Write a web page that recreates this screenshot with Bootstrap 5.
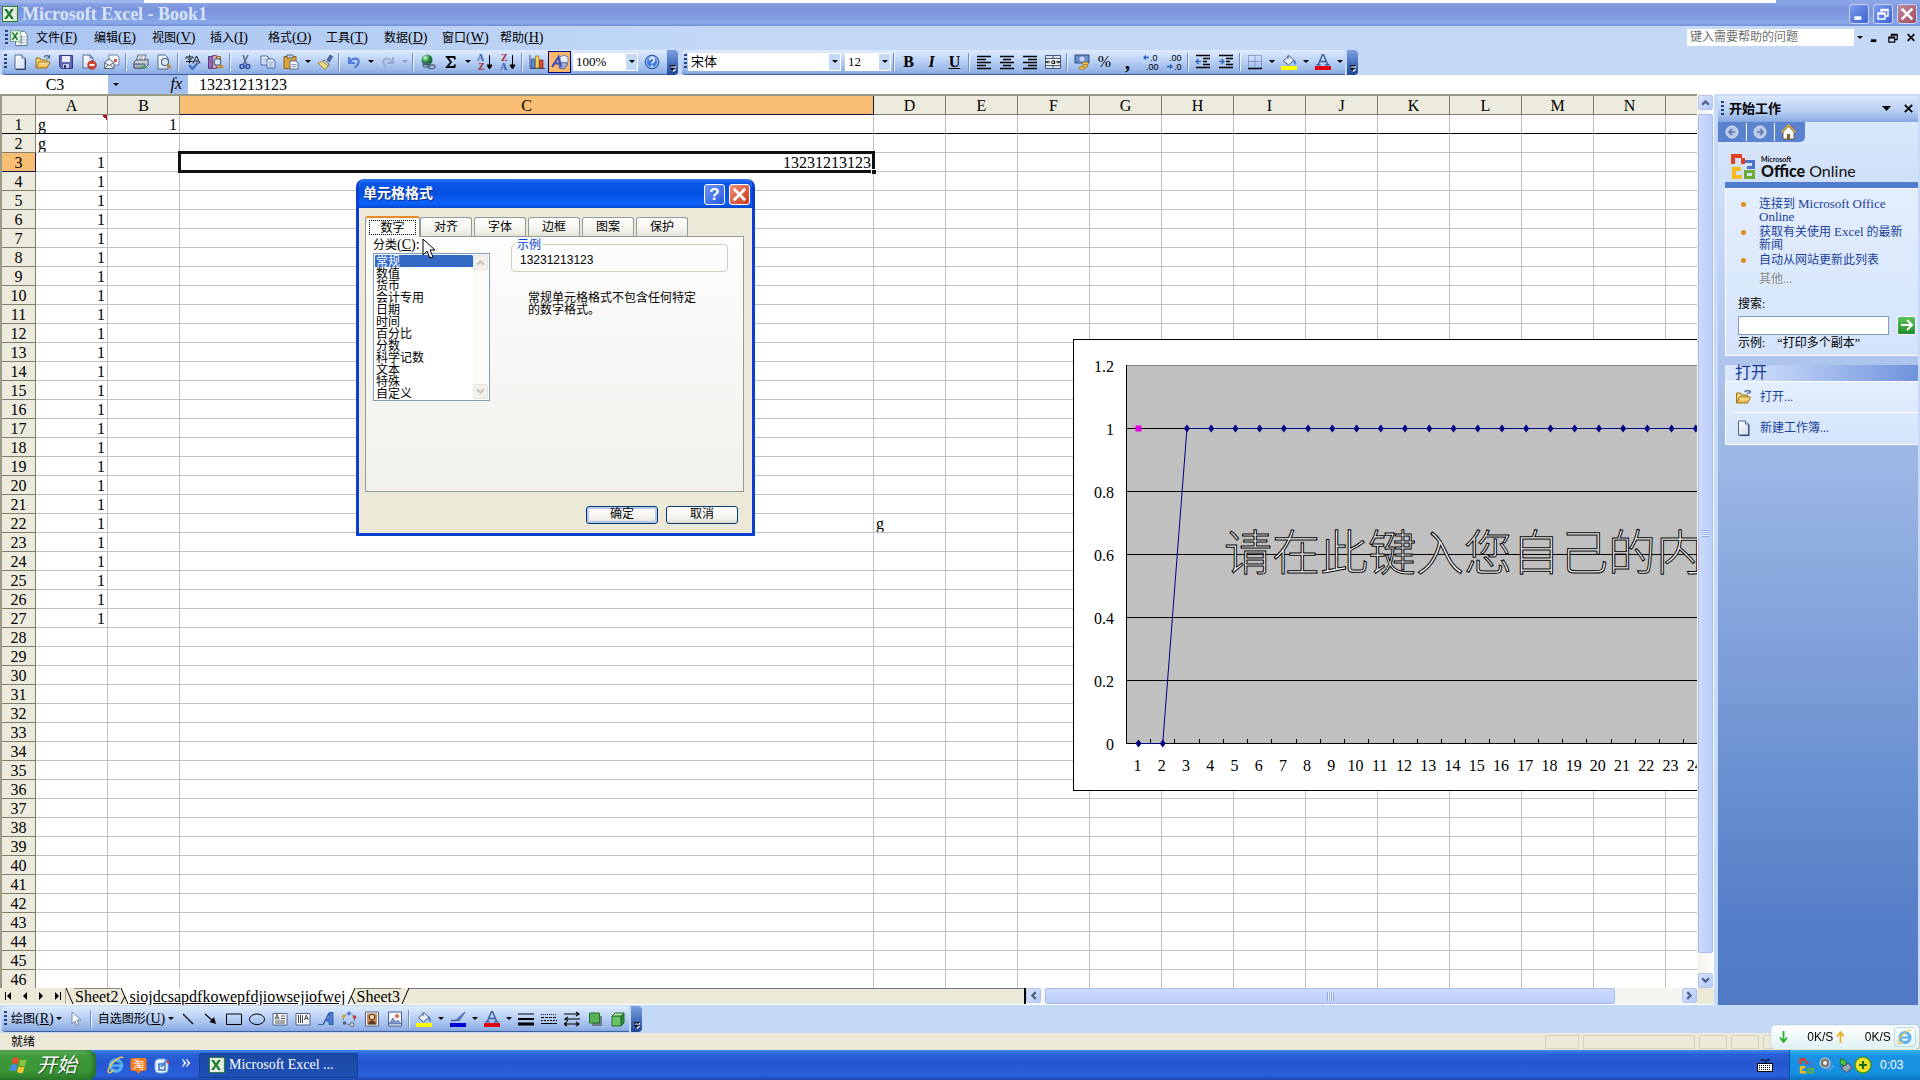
<!DOCTYPE html>
<html lang="zh-CN">
<head>
<meta charset="utf-8">
<meta name="viewport" content="width=device-width, initial-scale=1">
<title>Microsoft Excel - Book1</title>
<link href="https://cdn.jsdelivr.net/npm/bootstrap@5.3.0/dist/css/bootstrap.min.css" rel="stylesheet">
<style>
:root{--ui:"Liberation Serif","Noto Sans CJK SC",serif;--beige:#ece9d8;--line:#c0c0c0;--head:#edebdd;--olive:#807f6c}
body{font-family:var(--ui);font-size:12px;line-height:16px;color:#000;background:#c4d9f6;height:100vh;overflow:hidden}
button{font-family:inherit;color:inherit;border:0;background:none;padding:0}
svg{display:block;flex:none}
.lat{font-size:14px;line-height:0}
.strip{height:3px;background:linear-gradient(90deg,#9cb4ea 7.5%,#fff 7.5%,#fff 92.5%,#8ba6e8 92.5%)}
.titlebar{height:23px;background:linear-gradient(#8aa4e6,#7b93dc 25%,#7f9ce2 60%,#87a9e8 85%,#7690da);color:#d8e4f8;font-size:18px;font-weight:bold;padding:0 3px 0 2px}
.wbtn{width:20px;height:20px;border:1px solid #c9d6f5;border-radius:3px;background:linear-gradient(135deg,#7c9bee,#3d63d0)}
.wbtn.shut{background:linear-gradient(135deg,#c28b9c,#a04a60)}
.menubar{height:24px;background:linear-gradient(90deg,#a9c4f2,#c4d9f6 38%);padding-left:5px}
.grip{width:3px;height:16px;background:repeating-linear-gradient(#27417a 0 2px,transparent 2px 4px);margin-right:1px}
.mitem{width:58px;height:22px;text-align:left}
.askbox{width:178px;height:17px;background:#fff}
.askbox input{width:164px;border:0;padding:0 3px;font-size:12px;height:17px;color:#666;font-family:var(--ui);outline:0}
.askbox input::placeholder{color:#6d6d6d;opacity:1}
.drop{width:11px;align-self:stretch;background:#c4d9f6}
.drop,.darr{display:flex;align-items:center;justify-content:center}
.drop::before,.darr::before{content:"";border:3px solid transparent;border-top:3px solid #000;border-bottom:0}
.darr{width:11px;height:22px}
.darr.off::before{border-top-color:#8a9bbd}
.bars{height:25px;background:#c4d9f6;padding-left:2px}
.tbar{height:25px;background:linear-gradient(#dfebfd,#c3d8f8 35%,#9dbaea 80%,#86a8e2);border-bottom:1px solid #3c5f9e;border-radius:4px 0 0 4px;padding-left:2px}
.tb{width:23px;height:22px;display:flex;align-items:center;justify-content:center}
.tb.on{background:#fdb768;border:1px solid #000080}
.vsep{width:6px;height:18px;background:linear-gradient(90deg,transparent 2px,#6a8ccb 2px 3px,#f1f6fe 3px 4px,transparent 4px)}
.tend{width:11px;height:25px;background:linear-gradient(#7ba0de,#4a74c0 50%,#1f4494);border-radius:0 4px 4px 0;display:flex;align-items:flex-end;justify-content:center;padding-bottom:3px;margin-left:2px}
.tend svg{filter:drop-shadow(1px 1px 0 #fff)}
.combo{height:18px;background:#fff;border:1px solid #fff}
.combo select{appearance:none;border:0;background:#fff;font-size:13px;line-height:16px;padding:0 2px;height:16px;flex:1;min-width:0;font-family:var(--ui);outline:0}
.zoomw{width:65px;margin:0 2px}
.fontw{width:153px}
.sizew{width:46px}
.fbar{height:19px;background:#fff;font-size:16px;line-height:20px}
.namebox{width:106px;margin-left:2px;text-align:center}
.fxbox{width:80px;background:#a4bff0;padding:0 2px}
.fxbox i{font-size:16px}
.formula{border:0;outline:0;flex:1;padding:1px 11px 0;font-size:16px;font-family:var(--ui);height:19px}
.sheetwrap{border-left:2px solid #9b9a86;border-top:2px solid #9b9a86;background:#fff;min-height:0}
.grid{border-collapse:separate;border-spacing:0;table-layout:fixed;width:100%;font-size:16px}
.grid td,.grid th{height:19px;line-height:16px;padding:2px 2px 0;border-right:1px solid var(--line);border-bottom:1px solid var(--line);white-space:nowrap;font-weight:normal;overflow:hidden}
.grid th{background:var(--head);border-color:var(--olive);text-align:center;padding:2px 0 0}
.grid th.hot{background:#f8bf74;border-bottom-color:#1b1340;border-right-color:#1b1340}
.grid .first td,.grid .first th{border-bottom-color:#000}
.grid td:last-child,.grid thead th:last-child{border-right:0}
.num{text-align:right}
.grid td.note{background:linear-gradient(45deg,transparent 50%,#b01020 50%) top right/5px 5px no-repeat}
.grid td.cur{position:relative;overflow:visible}
.cur::before{content:"";position:absolute;inset:-2px;border:3px solid #111}
.cur::after{content:"";position:absolute;right:-3px;bottom:-3px;width:5px;height:5px;background:#111;border:solid #fff;border-width:1px 0 0 1px}
.chart{position:absolute;left:1071px;top:243px}
.vbar{width:17px;flex:none;background:linear-gradient(90deg,#f1f3ee,#fefefb);padding:1px 1px 0}
.sbtn{width:15px;height:15px;border:1px solid #b3c5f0;border-radius:2px;background:linear-gradient(135deg,#d9e4fd,#b5c9f8);display:flex;align-items:center;justify-content:center;flex:none}
.thumb{border:1px solid #a6bbf0;border-radius:2px;background:linear-gradient(90deg,#cddafc,#bacdfa);display:flex;align-items:center;justify-content:center}
.vthumb{height:94%}
.hthumb{width:85%;background:linear-gradient(#cddafc,#bacdfa)}
.vgrip{width:7px;height:7px;background:repeating-linear-gradient(#8ea9e8 0 1px,#eef3fe 1px 2px)}
.hgrip{width:7px;height:9px;background:repeating-linear-gradient(90deg,#8ea9e8 0 1px,#eef3fe 1px 2px)}
.tabrow{height:17px;background:var(--beige);border-bottom:1px solid #fff}
.tabnav{width:66px;padding:0 3px 0 4px;border-right:1px solid #aaa79a}
.stab{font-size:16px;line-height:16px;height:16px;border-top:1px solid #8a8778;padding:0 1px;color:#000}
.stab.act{background:#fff;border-top-color:#fff;text-decoration:underline}
.hbar{width:673px;background:#f6f5f0;border-left:2px solid #000}
.corner{width:17px}
.pane{width:206px;flex:none;background:#c7daf7;padding:2px 2px 0 4px}
.paneinner{background:linear-gradient(#dbe8fb,#b6ccf2 22%,#a8c0ea 30%,#557fc8 90%,#4f79c2)}
.panehead{height:26px;background:linear-gradient(#dce9fc,#b6cdf2 60%,#86a8e0);font-size:13px;font-weight:bold;padding:0 4px 0 3px}
.panenav{width:87px;height:20px;background:#5a82ce;border-radius:0 0 5px 0;padding-left:7px}
.logo{margin:6px 0 0 8px;height:34px;padding-left:3px}
.logo div{font-family:Lato,"Open Sans",sans-serif;font-size:16px;line-height:17px;color:#111}
.logo b{font-weight:900}
.logo small{display:block;font-size:7px;line-height:6px;font-weight:bold}
.bluebar{height:6px;background:#4f7ccc;margin-left:7px}
.pbox{margin-left:7px;border:1px solid #fff;border-right:0;background:linear-gradient(#e3eefd,#d5e4fb)}
.pbox a{color:#1a3f9a;text-decoration:none}
.plist{list-style:none;margin:0;padding:9px 4px 0 33px;line-height:13px}
.plist .lat{font-size:13px}
.plist li{margin-bottom:2px;position:relative}
.plist li:not(.more)::before{content:"";position:absolute;left:-18px;top:4px;width:5px;height:5px;border-radius:50%;background:#e08a20}
.more{color:#8c8c86}
.sfield{width:151px;height:19px;border:1px solid #7f9db9;padding:0 2px;outline:0}
.gobtn{width:19px;height:19px;background:linear-gradient(#5cc15a,#1f8f2d);border:1px solid #fff;border-radius:2px;display:flex;align-items:center;justify-content:center}
.openhead{margin:9px 0 0 7px;height:16px;background:linear-gradient(90deg,#dde9fb,#c7d8f8 20%,#6f93de);font-size:16px;color:#17398f;padding-left:10px}
.orow{height:31px;padding-left:1px}
.drawrow{background:#c4d9f6;height:28px;padding:1px 0 0 2px}
.drawrow .tbar,.drawrow .tend{height:26px}
.dlabel{height:22px;white-space:nowrap}
.status{height:17px;background:var(--beige);padding:1px 0 0 11px}
.spane{border:1px solid #d6d3c2;height:14px;margin-left:4px;width:28px}
.spane.w1{width:34px}
.spane.w2{width:112px}
.spane.w3{width:157px}
.taskbar{height:30px;background:linear-gradient(#3f86ee,#2a63d8 14%,#2556cf 40%,#2b60dc 85%,#1e46ae)}
.start{width:96px;background:linear-gradient(#6bb96a,#3f9a3c 20%,#3a9637 70%,#2c7a2b);border-radius:0 8px 8px 0;color:#fff;font-size:20px;font-style:italic;box-shadow:inset -3px 0 4px #24702a;padding-left:10px;text-shadow:1px 1px 1px #1d4d1d}
.task{width:159px;height:25px;background:linear-gradient(#1c49a6,#1e50b4);color:#fff;border:1px solid #173f94;border-radius:2px;padding-left:9px}
.tray{width:131px;background:linear-gradient(#37b4f2,#1a92e4 20%,#1590e0 80%,#0f70c0);border-left:1px solid #0c4da0;color:#fff;padding-left:8px;font-family:"Liberation Sans",sans-serif}
.speed{position:fixed;right:1px;bottom:31px;width:148px;height:24px;background:linear-gradient(#fff,#dff2f4);border:1px solid #e9f4f6;border-radius:4px;font-family:"Liberation Sans",sans-serif;box-shadow:0 0 1px #789;padding:0 2px 0 7px}
.iebox{width:22px;height:20px;border:1px solid #b6dbe8;border-radius:3px;display:flex;align-items:center;justify-content:center}
/* dialog window */
.dlg{position:absolute;left:354px;top:83px;width:399px;border:solid #0a3fd0;border-width:0 3px 3px;border-radius:8px 8px 0 0;background:var(--beige);overflow:hidden}
.dlgbar{height:29px;margin:0 -3px;background:linear-gradient(#2b78f5,#0a56e6 15%,#0550e0 50%,#0a62fa 85%,#0845c8);color:#fff;font-size:14px;font-weight:bold;padding:2px 5px 0 7px;text-shadow:1px 1px #0a2a80}
.cbtn{width:21px;height:21px;border:1px solid #fff;border-radius:3px;background:linear-gradient(135deg,#6d95f5,#2a5be0);display:flex;align-items:center;justify-content:center;font:bold 17px/17px "Liberation Sans",sans-serif;color:#fff}
.cbtn.shut{background:linear-gradient(135deg,#ec8e78,#cf3a1a)}
.dtabs{padding:0 6px;height:28px}
.dtab{width:52px;height:19px;border:1px solid #919b9c;border-bottom:0;border-radius:3px 3px 0 0;background:linear-gradient(#fff,#f2f1ea 70%,#e4e2d6);margin-right:2px;line-height:19px}
.dtab.act{width:55px;height:21px;margin-right:0;background:#fcfcfb;border-top:2px solid #e68b2c;z-index:1;margin-bottom:-1px}
.dtab.act span{display:block;margin:2px 3px 2px;border:1px dotted #000;line-height:14px;height:15px}
.dpanel{margin:0 8px 0 6px;height:256px;border:1px solid #919b9c;background:linear-gradient(#fdfdfc,#f1f0ec);padding:0 15px 0 7px}
.lbox{width:117px;height:148px;border:1px solid #7f9db9;background:#fff;padding:1px}
.lbox select{appearance:none;border:0;outline:0;width:98px;padding:0;margin:0;font:12px/12px var(--ui);height:144px;overflow:hidden;background:#fff}
.lbox option{display:flex;align-items:center;padding:0 0 0 1px;min-height:12px;height:12px;line-height:12px;color:#000}
.lbox option:checked{background:#316ac5 linear-gradient(#316ac5,#316ac5);color:#fff}
.lbar{width:15px;background:#fbfbf8;color:#c9c7ba}
.lbar div{height:15px;border:1px solid #e8e6dc;border-radius:2px;background:#f2f1eb;display:flex;align-items:center;justify-content:center}
.rside{width:217px;padding-top:2px}
.samp{height:33px;border:1px solid #d0d0bf;border-radius:4px;margin:0;padding:1px 8px 0}
.samp legend{float:none;width:auto;font-size:12px;line-height:12px;padding:0 2px;margin:0 0 0 -5px;color:#0046d5}
.samp output{display:block;font:12px/16px "Liberation Sans",sans-serif}
.desc{margin:20px 30px 0 17px;line-height:12px}
.dfoot{padding:14px 14px 9px 0}
.okb{width:72px;height:18px;border:1px solid #003c74;border-radius:3px;background:linear-gradient(#fff,#f4f3ee 70%,#dcd8cc);line-height:15px}
.okb.def{box-shadow:inset 0 0 0 2px #b5c9ef}
.pointer{position:absolute;left:63px;top:59px}
.blue{color:#4d6185}
</style>
</head>
<body class="d-flex flex-column">

<svg width="0" height="0" class="position-absolute">
<defs>
<linearGradient id="gfold" x1="0" y1="0" x2="0" y2="1"><stop offset="0" stop-color="#fff0a8"/><stop offset="1" stop-color="#e8a93a"/></linearGradient>
<linearGradient id="gpage" x1="0" y1="0" x2="1" y2="1"><stop offset="0" stop-color="#fff"/><stop offset="1" stop-color="#cfd8ea"/></linearGradient>
<radialGradient id="gball" cx=".35" cy=".3"><stop offset="0" stop-color="#dffbe0"/><stop offset=".6" stop-color="#3ba456"/><stop offset="1" stop-color="#1a6a3c"/></radialGradient>
<symbol id="xl" viewBox="0 0 16 16"><rect x=".5" y=".5" width="15" height="15" fill="#e9f3e4" stroke="#2f7d3b"/><path d="M10 2h4v12h-4z" fill="#fff" stroke="#9ac49a" stroke-width=".6"/><path d="M10 5h4M10 8h4M10 11h4" stroke="#9ac49a" stroke-width=".6"/><path d="M2 3l3 0 2 3.300L9 3h3L8.400 8l3.600 5H9L7 9.800 5 13H2l3.600-5z" fill="#1f7a36"/></symbol>
<symbol id="new" viewBox="0 0 16 16"><path d="M3 1h7l3 3v11H3z" fill="url(#gpage)" stroke="#51698f"/><path d="M10 1v3h3" fill="#dfe7f5" stroke="#51698f"/><path d="M13.500 4.500v11H4" stroke="#27406e" fill="none"/></symbol>
<symbol id="open" viewBox="0 0 16 16"><path d="M1 14V4h4l1 2h6v2" fill="#f0cf6f" stroke="#9a7420"/><path d="M1 14l3-6h11l-3 6z" fill="url(#gfold)" stroke="#9a7420"/><path d="M9 3c2-2 4-1.500 5 0M14.500 1v3h-3" fill="none" stroke="#43628f" stroke-width="1.200"/></symbol>
<symbol id="save" viewBox="0 0 16 16"><path d="M1.500 1.500h13v13h-11l-2-2z" fill="#5f63b8" stroke="#35397f"/><path d="M4 2h8v6H4z" fill="#e8ecfa"/><path d="M5 10h6v4H5z" fill="#c8cdec"/><path d="M6 11h2v3H6z" fill="#33377a"/></symbol>
<symbol id="perm" viewBox="0 0 16 16"><path d="M2 1h7l3 3v10H2z" fill="url(#gpage)" stroke="#51698f"/><path d="M9 1v3h3" fill="none" stroke="#51698f"/><circle cx="11" cy="11" r="4.300" fill="#d5442e" stroke="#8e1f10" stroke-width=".6"/><path d="M8.500 10h5v2h-5z" fill="#fff"/></symbol>
<symbol id="mail" viewBox="0 0 16 16"><path d="M5 1h8l2 2v8H5z" fill="#fff" stroke="#6c7c97"/><path d="M10 5h3v3h-3z" fill="#d1574b"/><path d="M.5 8.500L5 5l5 3.500v6H.5z" fill="#eef0f4" stroke="#5d6a80"/><path d="M.5 8.500l4.700 3 4.800-3M.5 14.500L4 11M10 14.500L6.500 11" fill="none" stroke="#5d6a80"/></symbol>
<symbol id="print" viewBox="0 0 16 16"><path d="M5 1h8l-2 6H3z" fill="#fff" stroke="#59657b"/><path d="M5.500 3h5M5 5h5" stroke="#8a93a5"/><path d="M1 8l2-2h10l2-1v6l-3 3H1z" fill="#c9ced8" stroke="#4b566b"/><path d="M1 10h11v4H1z" fill="#aab1bf" stroke="#4b566b"/><path d="M8 12h5l1 2H8z" fill="#3fae49"/></symbol>
<symbol id="prev" viewBox="0 0 16 16"><path d="M2 1h7l3 3v11H2z" fill="url(#gpage)" stroke="#51698f"/><circle cx="9" cy="8" r="3.500" fill="#d8ecfb" stroke="#4b6792" stroke-width="1.200"/><path d="M11.500 10.500l3.500 3.500" stroke="#c88a28" stroke-width="2.400"/></symbol>
<symbol id="spell" viewBox="0 0 16 16"><path d="M1 3h7M4.500 1v2M1 3v1.500M8 3v1.500M2.500 5h4L4.500 6.500v3M1 7.500h7M8 9.500L11.500 2 15 9.500M9.500 7h4" fill="none" stroke="#111"/><path d="M4 11l3.500 4L13 8.500" fill="none" stroke="#3f6fc0" stroke-width="2.400"/></symbol>
<symbol id="research" viewBox="0 0 16 16"><path d="M.5 2.500h4v12h-4z" fill="#9067b5" stroke="#5a3a80"/><path d="M4.500 1.500h4v13h-4z" fill="#d0a0c0" stroke="#7c4a6e"/><path d="M8.500 2.500h4v11h-4z" fill="#eac67d" stroke="#8f7030"/><circle cx="9.500" cy="8" r="3.300" fill="#d8ecfb" stroke="#4b6792" stroke-width="1.200"/><path d="M12 10.500l3 3.500" stroke="#c88a28" stroke-width="2.200"/></symbol>
<symbol id="cut" viewBox="0 0 16 16"><path d="M6 1l3.500 9M11 1L6.500 10" stroke="#556a8f" stroke-width="1.600"/><circle cx="5" cy="12.500" r="2" fill="none" stroke="#2b4ea2" stroke-width="1.600"/><circle cx="10.800" cy="12.500" r="2" fill="none" stroke="#2b4ea2" stroke-width="1.600"/></symbol>
<symbol id="copy" viewBox="0 0 16 16"><path d="M1 2h6l2 2v7H1z" fill="#fff" stroke="#3f5fa5"/><path d="M2.500 5h4M2.500 7h4M2.500 9h3" stroke="#8aa0d0"/><path d="M7 5h6l2 2v7H7z" fill="#fff" stroke="#3f5fa5"/><path d="M8.500 8h5M8.500 10h5M8.500 12h5" stroke="#6f8bc8"/></symbol>
<symbol id="paste" viewBox="0 0 16 16"><path d="M1 2.500h12v12H1z" fill="#dba53c" stroke="#8a6217"/><path d="M4 1h6v3H4z" fill="#cfd4de" stroke="#59657b"/><path d="M7 7h6l2 2v6H7z" fill="#fff" stroke="#51698f"/><path d="M8.500 10.500h5M8.500 12.500h5" stroke="#7d94bf"/></symbol>
<symbol id="brush" viewBox="0 0 16 16"><path d="M10 6l3-5 2.500 1.500L12.500 8z" fill="#4d67a8" stroke="#2d3f70" stroke-width=".6"/><path d="M7 6l5 4-1 2-6-4z" fill="#d9dde8" stroke="#667"/><path d="M5 7l6 5-3 3.500L1 9c2 0 3-1 4-2z" fill="#f2dc86" stroke="#a5842b"/></symbol>
<symbol id="undo" viewBox="0 0 16 16"><path d="M3 3v6h6M3.500 8.500C7 2.500 14 4 12.500 9c-.5 2-2 3.500-4 4.500" fill="none" stroke="#4f7cd8" stroke-width="2.200"/></symbol>
<symbol id="redo" viewBox="0 0 16 16"><path d="M13 3v6H7M12.500 8.500C9 2.500 2 4 3.500 9c.5 2 1.500 3 2.500 4" fill="none" stroke="#93a9cf" stroke-width="1.800"/></symbol>
<symbol id="link" viewBox="0 0 16 16"><circle cx="7" cy="6" r="5.500" fill="url(#gball)"/><rect x="3" y="9.500" width="7" height="3.600" rx="1.800" fill="none" stroke="#55627d" stroke-width="1.300"/><rect x="8" y="11" width="7" height="3.600" rx="1.800" fill="none" stroke="#55627d" stroke-width="1.300"/></symbol>
<symbol id="sigma" viewBox="0 0 16 16"><path d="M12 5.500L11.500 3H4l4 5-4 5h7.500l.5-2.500" fill="none" stroke="#000" stroke-width="1.800"/></symbol>
<symbol id="chart" viewBox="0 0 16 16"><path d="M1 1v13.500h15" stroke="#33507f" fill="none"/><path d="M2.500 5h3.500v9H2.500z" fill="#5f86d8" stroke="#2b4a8c" stroke-width=".7"/><path d="M6.500 2H10v12H6.500z" fill="#f2cf48" stroke="#92701c" stroke-width=".7"/><path d="M10.500 6H14v8h-3.500z" fill="#dd4a35" stroke="#7e1f14" stroke-width=".7"/></symbol>
<symbol id="help" viewBox="0 0 16 16"><circle cx="8" cy="8" r="6.800" fill="#3f7be0" stroke="#2550a0"/><circle cx="8" cy="8" r="5.600" fill="none" stroke="#cfe0ff" stroke-width=".8"/><path d="M5.800 6.200c0-3 4.600-3 4.600-.2 0 1.700-2.300 1.700-2.300 3.500M8 11v1.700" fill="none" stroke="#fff" stroke-width="1.600"/></symbol>
<symbol id="al" viewBox="0 0 16 16"><path d="M1 2.500h14M1 5.500h9M1 8.500h14M1 11.500h9M1 14.500h14" stroke="#000" stroke-width="1.300"/></symbol>
<symbol id="ac" viewBox="0 0 16 16"><path d="M1 2.500h14M4 5.500h8M1 8.500h14M4 11.500h8M1 14.500h14" stroke="#000" stroke-width="1.300"/></symbol>
<symbol id="ar" viewBox="0 0 16 16"><path d="M1 2.500h14M6 5.500h9M1 8.500h14M6 11.500h9M1 14.500h14" stroke="#000" stroke-width="1.300"/></symbol>
<symbol id="merge" viewBox="0 0 16 16"><path d="M.5 1.500h15v13H.5z" fill="#dfe6f3" stroke="#45577c"/><path d="M.5 4.500h15M.5 11.500h15M8 1v3.500M8 11.500v3" stroke="#45577c"/><path d="M1 5h14v6H1z" fill="#fff"/><path d="M1 8h4M3 6.500L1.500 8 3 9.500M15 8h-4M13 6.500L14.500 8 13 9.500" stroke="#000" fill="none"/><circle cx="8" cy="8.300" r="1.500" fill="none" stroke="#000"/><path d="M9.700 6.500v3.500" stroke="#000"/></symbol>
<symbol id="cash" viewBox="0 0 16 16"><path d="M1 1h14v8H1z" fill="#6b8cc8" stroke="#2e4a86"/><circle cx="8" cy="5" r="2.500" fill="#c6d6f2"/><ellipse cx="11.500" cy="9.500" rx="3" ry="1.400" fill="#f4c44c" stroke="#946c16" stroke-width=".7"/><ellipse cx="11" cy="12" rx="3" ry="1.400" fill="#f4c44c" stroke="#946c16" stroke-width=".7"/><ellipse cx="8" cy="14" rx="3" ry="1.400" fill="#f4c44c" stroke="#946c16" stroke-width=".7"/></symbol>
<symbol id="outd" viewBox="0 0 16 16"><path d="M1 1.500h14M8 4.500h7M8 7.500h4M8 10.500h7M1 13.500h14" stroke="#000" stroke-width="1.500"/><path d="M6 7.500H1M3.500 5L1 7.500 3.500 10" stroke="#3768c8" fill="none" stroke-width="1.400"/></symbol>
<symbol id="ind" viewBox="0 0 16 16"><path d="M1 1.500h14M8 4.500h7M8 7.500h4M8 10.500h7M1 13.500h14" stroke="#000" stroke-width="1.500"/><path d="M1 7.500h5M3.500 5L6 7.500 3.500 10" stroke="#3768c8" fill="none" stroke-width="1.400"/></symbol>
<symbol id="border" viewBox="0 0 16 16"><path d="M1.500 1.500h13v12M1.500 1.500v12M8 1.500v12M1.500 7.500h13" fill="none" stroke="#5d6f92" stroke-dasharray="1 1"/><path d="M1 14.500h14" stroke="#000" stroke-width="1.500"/></symbol>
<symbol id="fill" viewBox="0 0 16 16"><path d="M2.500 7L8 1.500 13 6.500 7.500 11z" fill="#e6edf8" stroke="#47597c"/><path d="M7 5V1.500" stroke="#47597c"/><path d="M12 5c3 1 3 4 2.500 6-2-1-1.500-3-2.500-6z" fill="#3f6fc8"/><path d="M0 12h16v4H0z" fill="#ff0"/></symbol>
<symbol id="pen" viewBox="0 0 16 16"><path d="M1 9c3 2 4-1 6 0l2 1 6-9-7 6-2 3z" fill="#5b84cf" stroke="#2d4a8a" stroke-width=".7"/><path d="M0 12h16v4H0z" fill="#0000d8"/></symbol>
<symbol id="redbar" viewBox="0 0 16 16"><path d="M3 11L7.500.8h1L13 11M5 7.500h6M1.500 10.800h4M10 10.800h4.500" stroke="#3b5f9f" fill="none" stroke-width="1.500"/><path d="M0 12h16v4H0z" fill="#e00010"/></symbol>
<symbol id="artA" viewBox="0 0 16 16"><path d="M0 13.500h5l6-12h4v12h-4V10H7l-1.500 3.500M8.300 8H11V3z" fill="#4b7bd4" stroke="#224c9c" stroke-width=".8"/></symbol>
<symbol id="shapes" viewBox="0 0 18 16"><path d="M9 3l4-2 4 2v5l-4 2-4-2z" fill="#e9edf8" stroke="#6a78a5"/><path d="M8 11l5-3 4 2-4 5-5-1z" fill="#9fb0d8" stroke="#516498"/><path d="M1 13L7.500 3 10 13M3.500 9.500H9" stroke="#3c4fb8" stroke-width="2.200" fill="none"/></symbol>
<symbol id="cursor" viewBox="0 0 16 16"><path d="M4 1v12l3-3 2 5 2-1-2-5h4z" fill="#fff" stroke="#7787ab"/></symbol>
<symbol id="ln" viewBox="0 0 16 16"><path d="M3 3l10 10" stroke="#000" stroke-width="1.200"/></symbol>
<symbol id="arrw" viewBox="0 0 16 16"><path d="M2 3l8 7" stroke="#000" stroke-width="1.200"/><path d="M13 13l-2-7-4.500 5z"/></symbol>
<symbol id="rc" viewBox="0 0 16 16"><path d="M.5 3h15v10.500H.5z" fill="none" stroke="#000"/></symbol>
<symbol id="el" viewBox="0 0 16 16"><ellipse cx="8" cy="8.300" rx="7.500" ry="5.300" fill="none" stroke="#000"/></symbol>
<symbol id="tx" viewBox="0 0 16 16"><path d="M1 2.500h14v11.500H1z" fill="#fff" stroke="#4b5f8d"/><path d="M3 8.500l2-5 2 5M3.700 7h2.600M9 5h4M9 7.500h4M3 10h10M3 12h10" fill="none" stroke="#334" stroke-width=".9"/></symbol>
<symbol id="vx" viewBox="0 0 16 16"><path d="M1 2.500h14v11.500H1z" fill="#fff" stroke="#4b5f8d"/><path d="M3.500 4v8M5.500 4v8M7.500 4v8M9.500 9l1.800-5 2 5M10 7.500h3" fill="none" stroke="#334" stroke-width=".9"/></symbol>
<symbol id="dg" viewBox="0 0 16 16"><circle cx="8" cy="8" r="5.500" fill="none" stroke="#555" stroke-dasharray="2 2"/><circle cx="8" cy="2.500" r="2" fill="#5b7dcf"/><circle cx="13.500" cy="6" r="1.800" fill="#c83b2c"/><circle cx="11" cy="13.500" r="1.800" fill="#fff" stroke="#456"/><circle cx="3.500" cy="12" r="1.800" fill="#46617f"/><circle cx="2.500" cy="5.500" r="1.800" fill="#d9a43b"/></symbol>
<symbol id="clip" viewBox="0 0 16 16"><path d="M1.500 1h13v14h-13z" fill="#fff" stroke="#4b5f8d"/><path d="M3 2.500h10v11H3z" fill="#c58a4c"/><circle cx="8" cy="6" r="2.800" fill="#f4d7b2" stroke="#4b2c16"/><path d="M4 13.500c0-5 8-5 8 0z" fill="#5d3a25"/></symbol>
<symbol id="pic" viewBox="0 0 16 16"><path d="M1.500 1h13v14h-13z" fill="#f5f8fd" stroke="#4b5f8d"/><circle cx="10" cy="5" r="2" fill="#e06a3c"/><path d="M2 13l4-6 3 4 2-2 3 4z" fill="#7f98c8" stroke="#3a5590" stroke-width=".6"/></symbol>
<symbol id="lw" viewBox="0 0 16 16"><path d="M0 3h16" stroke="#000"/><path d="M0 8h16" stroke="#000" stroke-width="2"/><path d="M0 13h16" stroke="#000" stroke-width="3"/></symbol>
<symbol id="ds" viewBox="0 0 16 16"><path d="M0 3.500h16" stroke="#000" stroke-dasharray="1 1"/><path d="M0 6.500h16" stroke="#000" stroke-dasharray="3 1"/><path d="M0 9.500h16" stroke="#000" stroke-dasharray="2 1"/><path d="M0 12.500h16" stroke="#000"/></symbol>
<symbol id="aw" viewBox="0 0 16 16"><path d="M0 3h14M2 8h14M0 13h14M12 1l3 2-3 2M4 6L1 8l3 2M12 11l3 2-3 2M3 11l-3 2 3 2" fill="none" stroke="#000" stroke-width="1.200"/></symbol>
<symbol id="sh" viewBox="0 0 16 16"><path d="M5 5h10v10H5z" fill="#6d7b90"/><path d="M2.500 2h10v10h-10z" fill="#58b155" stroke="#23702b"/></symbol>
<symbol id="td" viewBox="0 0 16 16"><path d="M2 5h9v10H2z" fill="#6cc266" stroke="#23702b"/><path d="M2 5l3-3h9l-3 3z" fill="#b8e6b0" stroke="#23702b"/><path d="M11 5l3-3v10l-3 3z" fill="#2f8438" stroke="#23702b"/></symbol>
<symbol id="ovf" viewBox="0 0 8 8"><path d="M1 1.500h6" stroke="#000" stroke-width="1.500"/><path d="M1 4h6L4 7.500z"/></symbol>
<symbol id="ie" viewBox="0 0 16 16"><circle cx="8" cy="8.500" r="5" fill="none" stroke="#56b0f2" stroke-width="3"/><path d="M9 9.500h6v3H9z" fill="#2a63c8" opacity=".01"/><path d="M4 8.500h9" stroke="#56b0f2" stroke-width="2.200"/><path d="M14.500 1.500C11-.5 1 8 1 14c.8 2 4-.3 5-1.500" fill="none" stroke="#f0c65a" stroke-width="1.300"/></symbol>
<symbol id="off" viewBox="0 0 28 28"><path d="M2 2h11v4h3v6h-4V6H6v6H2z" fill="#e1401f"/><path d="M16 8h10v9h-8v-3h5v-3h-7z" fill="#4a74c8"/><path d="M3 15h9v4H7v4h6v4H3z" fill="#f6b921"/><path d="M15 18h11v9H15zm3 3v3h5v-3z" fill="#6cae34" fill-rule="evenodd"/></symbol>
<symbol id="up" viewBox="0 0 8 8"><path d="M1 6l3-3 3 3" fill="none" stroke="currentColor" stroke-width="2"/></symbol>
<symbol id="dn" viewBox="0 0 8 8"><path d="M1 2l3 3 3-3" fill="none" stroke="currentColor" stroke-width="2"/></symbol>
<symbol id="lf" viewBox="0 0 8 8"><path d="M6 1L3 4l3 3" fill="none" stroke="currentColor" stroke-width="2"/></symbol>
<symbol id="rt" viewBox="0 0 8 8"><path d="M2 1l3 3-3 3" fill="none" stroke="currentColor" stroke-width="2"/></symbol>
<symbol id="x" viewBox="0 0 12 12"><path d="M2 2l8 8M10 2l-8 8" stroke="currentColor" stroke-width="2"/></symbol>
<symbol id="res" viewBox="0 0 12 12"><path d="M4 4V1.500h7V8H8.500M4 2.500h7M1 5h7v6H1zM1 6h7" fill="none" stroke="currentColor" stroke-width="1.400"/></symbol>
<symbol id="mn" viewBox="0 0 12 12"><path d="M2 9.500h6" stroke="currentColor" stroke-width="3"/></symbol>
</defs>
</svg>

<div class="strip"></div>
<header class="titlebar d-flex align-items-center">
  <svg width="16" height="16"><use href="#xl"/></svg>
  <span class="ms-1 flex-grow-1">Microsoft Excel - Book1</span>
  <div class="d-flex gap-1 text-white">
    <button class="wbtn d-flex align-items-center justify-content-center" aria-label="最小化"><svg width="14" height="14"><use href="#mn"/></svg></button>
    <button class="wbtn d-flex align-items-center justify-content-center" aria-label="还原"><svg width="12" height="12"><use href="#res"/></svg></button>
    <button class="wbtn shut d-flex align-items-center justify-content-center" aria-label="关闭"><svg width="16" height="16"><use href="#x"/></svg></button>
  </div>
</header>

<nav class="menubar d-flex align-items-center">
  <span class="grip"></span>
  <svg width="19" height="18" class="me-2" viewBox="0 0 20 18"><path d="M7 2h9l3 3v12H7z" fill="#fff" stroke="#51698f"/><path d="M10 8h7M10 11h7M10 14h7M13 6v10" stroke="#7f97c4"/><use href="#xl" x="1" y="1" width="12" height="12"/></svg>
  <button class="mitem">文件<span class="lat">(<u>F</u>)</span></button>
  <button class="mitem">编辑<span class="lat">(<u>E</u>)</span></button>
  <button class="mitem">视图<span class="lat">(<u>V</u>)</span></button>
  <button class="mitem">插入<span class="lat">(<u>I</u>)</span></button>
  <button class="mitem">格式<span class="lat">(<u>O</u>)</span></button>
  <button class="mitem">工具<span class="lat">(<u>T</u>)</span></button>
  <button class="mitem">数据<span class="lat">(<u>D</u>)</span></button>
  <button class="mitem">窗口<span class="lat">(<u>W</u>)</span></button>
  <button class="mitem">帮助<span class="lat">(<u>H</u>)</span></button>
  <div class="askbox d-flex align-items-center ms-auto">
    <input type="text" placeholder="键入需要帮助的问题" aria-label="键入需要帮助的问题">
    <span class="drop ms-auto"></span>
  </div>
  <div class="d-flex align-items-center gap-2 px-1">
    <button aria-label="最小化窗口"><svg width="11" height="11"><use href="#mn"/></svg></button>
    <button aria-label="还原窗口"><svg width="10" height="10"><use href="#res"/></svg></button>
    <button aria-label="关闭窗口"><svg width="10" height="11"><use href="#x"/></svg></button>
  </div>
</nav>

<div class="bars d-flex">
  <div class="tbar d-flex align-items-center pe-1">
    <span class="grip"></span>
    <button class="tb" aria-label="新建"><svg width="16" height="16"><use href="#new"/></svg></button>
    <button class="tb" aria-label="打开"><svg width="16" height="16"><use href="#open"/></svg></button>
    <button class="tb" aria-label="保存"><svg width="16" height="16"><use href="#save"/></svg></button>
    <button class="tb" aria-label="权限"><svg width="16" height="16"><use href="#perm"/></svg></button>
    <button class="tb" aria-label="电子邮件"><svg width="16" height="16"><use href="#mail"/></svg></button>
    <span class="vsep"></span>
    <button class="tb" aria-label="打印"><svg width="16" height="16"><use href="#print"/></svg></button>
    <button class="tb" aria-label="打印预览"><svg width="16" height="16"><use href="#prev"/></svg></button>
    <span class="vsep"></span>
    <button class="tb" aria-label="拼写检查"><svg width="16" height="16"><use href="#spell"/></svg></button>
    <button class="tb" aria-label="信息检索"><svg width="16" height="16"><use href="#research"/></svg></button>
    <span class="vsep"></span>
    <button class="tb" aria-label="剪切"><svg width="16" height="16"><use href="#cut"/></svg></button>
    <button class="tb" aria-label="复制"><svg width="16" height="16"><use href="#copy"/></svg></button>
    <button class="tb" aria-label="粘贴"><svg width="16" height="16"><use href="#paste"/></svg></button>
    <button class="darr" aria-label="粘贴选项"></button>
    <button class="tb" aria-label="格式刷"><svg width="16" height="16"><use href="#brush"/></svg></button>
    <span class="vsep"></span>
    <button class="tb" aria-label="撤消"><svg width="16" height="16"><use href="#undo"/></svg></button>
    <button class="darr" aria-label="撤消列表"></button>
    <button class="tb" aria-label="恢复"><svg width="16" height="16"><use href="#redo"/></svg></button>
    <button class="darr off" aria-label="恢复列表"></button>
    <span class="vsep"></span>
    <button class="tb" aria-label="超链接"><svg width="16" height="16"><use href="#link"/></svg></button>
    <button class="tb" aria-label="自动求和"><svg width="16" height="16"><use href="#sigma"/></svg></button>
    <button class="darr" aria-label="求和选项"></button>
    <button class="tb" aria-label="升序"><svg width="16" height="18" viewBox="0 0 16 18"><g font-family="Liberation Serif" font-size="10" font-weight="bold"><text x="0" y="8" fill="#3a5fb0">A</text><text x="1" y="17" fill="#a82a3a">Z</text></g><path d="M12.500 2v12M10 12l2.500 4 2.500-4z" stroke="#000"/></svg></button>
    <button class="tb" aria-label="降序"><svg width="16" height="18" viewBox="0 0 16 18"><g font-family="Liberation Serif" font-size="10" font-weight="bold"><text x="1" y="8" fill="#a82a3a">Z</text><text x="0" y="17" fill="#3a5fb0">A</text></g><path d="M12.500 2v12M10 12l2.500 4 2.500-4z" stroke="#000"/></svg></button>
    <span class="vsep"></span>
    <button class="tb" aria-label="图表向导"><svg width="16" height="16"><use href="#chart"/></svg></button>
    <button class="tb on" aria-label="绘图"><svg width="18" height="16"><use href="#shapes"/></svg></button>
    <div class="combo zoomw d-flex"><select aria-label="显示比例"><option>100%</option></select><span class="drop"></span></div>
    <button class="tb" aria-label="帮助"><svg width="16" height="16"><use href="#help"/></svg></button>
  </div>
  <button class="tend ms-0" aria-label="工具栏选项"><svg width="7" height="8"><use href="#ovf"/></svg></button>
  <div class="tbar d-flex align-items-center ms-1">
    <span class="grip"></span>
    <div class="combo fontw d-flex"><select aria-label="字体"><option>宋体</option></select><span class="drop"></span></div>
    <div class="combo sizew d-flex ms-1"><select aria-label="字号"><option>12</option></select><span class="drop"></span></div>
    <span class="vsep"></span>
    <button class="tb fs-6 fw-bold">B</button>
    <button class="tb fs-6 fw-bold fst-italic">I</button>
    <button class="tb fs-6 fw-bold text-decoration-underline">U</button>
    <span class="vsep"></span>
    <button class="tb" aria-label="左对齐"><svg width="16" height="16"><use href="#al"/></svg></button>
    <button class="tb" aria-label="居中"><svg width="16" height="16"><use href="#ac"/></svg></button>
    <button class="tb" aria-label="右对齐"><svg width="16" height="16"><use href="#ar"/></svg></button>
    <button class="tb" aria-label="合并及居中"><svg width="16" height="16"><use href="#merge"/></svg></button>
    <span class="vsep"></span>
    <button class="tb" aria-label="货币样式"><svg width="16" height="16"><use href="#cash"/></svg></button>
    <button class="tb fs-6">%</button>
    <button class="tb fs-5 fw-bold">,</button>
    <button class="tb" aria-label="增加小数位数"><svg width="18" height="18" viewBox="0 0 18 18"><g font-family="Liberation Sans" font-size="9"><text x="8" y="8">.0</text><text x="4" y="17">.00</text></g><path d="M7 4.500H2M4 2.500l-2 2 2 2" fill="none" stroke="#2d5fc0" stroke-width="1.300"/></svg></button>
    <button class="tb" aria-label="减少小数位数"><svg width="18" height="18" viewBox="0 0 18 18"><g font-family="Liberation Sans" font-size="9"><text x="4" y="8">.00</text><text x="9" y="17">.0</text></g><path d="M2 13.500h5M5 11.500l2 2-2 2" fill="none" stroke="#2d5fc0" stroke-width="1.300"/></svg></button>
    <span class="vsep"></span>
    <button class="tb" aria-label="减少缩进量"><svg width="16" height="16"><use href="#outd"/></svg></button>
    <button class="tb" aria-label="增加缩进量"><svg width="16" height="16"><use href="#ind"/></svg></button>
    <span class="vsep"></span>
    <button class="tb" aria-label="边框"><svg width="16" height="16"><use href="#border"/></svg></button>
    <button class="darr" aria-label="边框选项"></button>
    <button class="tb" aria-label="填充颜色"><svg width="16" height="16"><use href="#fill"/></svg></button>
    <button class="darr" aria-label="填充颜色选项"></button>
    <button class="tb" aria-label="字体颜色"><svg width="16" height="16"><use href="#redbar"/></svg></button>
    <button class="darr" aria-label="字体颜色选项"></button>
  </div>
  <button class="tend" aria-label="工具栏选项"><svg width="7" height="8"><use href="#ovf"/></svg></button>
</div>

<div class="fbar d-flex">
  <div class="namebox">C3</div>
  <div class="fxbox d-flex justify-content-between align-items-center"><button class="darr" aria-label="名称列表"></button><i class="me-1">fx</i></div>
  <input class="formula" type="text" value="13231213123" aria-label="编辑栏">
</div>

<main class="d-flex flex-grow-1" style="min-height:0">
  <section class="d-flex flex-column flex-grow-1 overflow-hidden">
    <div class="d-flex flex-grow-1" style="min-height:0">
      <div class="sheetwrap flex-grow-1 overflow-hidden position-relative">
        <table class="grid">
          <colgroup id="cols"></colgroup>
          <thead><tr id="heads"></tr></thead>
          <tbody id="rows"></tbody>
        </table>

        <svg class="chart" id="plot" width="680" height="453" font-family="Liberation Serif" font-size="16"></svg>

        <div class="dlg" role="dialog" aria-label="单元格格式">
          <div class="dlgbar d-flex align-items-center">
            <span class="flex-grow-1">单元格格式</span>
            <button class="cbtn me-1">?</button>
            <button class="cbtn shut" aria-label="关闭"><svg width="17" height="17"><use href="#x"/></svg></button>
          </div>
          <div class="dtabs d-flex align-items-end">
            <button class="dtab act"><span>数字</span></button>
            <button class="dtab">对齐</button>
            <button class="dtab">字体</button>
            <button class="dtab">边框</button>
            <button class="dtab">图案</button>
            <button class="dtab">保护</button>
          </div>
          <div class="dpanel d-flex justify-content-between">
            <div>
              <label for="cat" class="d-block">分类<span class="lat">(<u>C</u>):</span></label>
              <div class="lbox d-flex">
                <select id="cat" size="12">
                  <option selected>常规</option><option>数值</option><option>货币</option><option>会计专用</option><option>日期</option><option>时间</option><option>百分比</option><option>分数</option><option>科学记数</option><option>文本</option><option>特殊</option><option>自定义</option>
                </select>
                <div class="lbar d-flex flex-column justify-content-between ms-auto">
                  <div><svg width="9" height="9"><use href="#up"/></svg></div>
                  <div><svg width="9" height="9"><use href="#dn"/></svg></div>
                </div>
              </div>
            </div>
            <div class="rside">
              <fieldset class="samp"><legend>示例</legend><output>13231213123</output></fieldset>
              <p class="desc">常规单元格格式不包含任何特定的数字格式。</p>
            </div>
          </div>
          <div class="dfoot d-flex justify-content-end gap-2">
            <button class="okb def">确定</button>
            <button class="okb">取消</button>
          </div>
          <svg class="pointer" width="14" height="21" viewBox="0 0 14 21"><path d="M1 1v16l4-4 3 7 3-1-3-7h5z" fill="#fff" stroke="#000"/></svg>
        </div>
      </div>
      <div class="vbar blue d-flex flex-column">
        <button class="sbtn" aria-label="向上"><svg width="9" height="9"><use href="#up"/></svg></button>
        <div class="thumb vthumb mt-1"><span class="vgrip"></span></div>
        <button class="sbtn mt-auto" aria-label="向下"><svg width="9" height="9"><use href="#dn"/></svg></button>
      </div>
    </div>
    <div class="tabrow d-flex">
      <div class="tabnav d-flex align-items-center justify-content-between">
        <svg width="8" height="8" viewBox="0 0 8 8"><path d="M1.500 0v8" stroke="#000"/><path d="M7 0v8L3 4z"/></svg>
        <svg width="8" height="8" viewBox="0 0 8 8"><path d="M6 0v8L2 4z"/></svg>
        <svg width="8" height="8" viewBox="0 0 8 8"><path d="M2 0v8l4-4z"/></svg>
        <svg width="8" height="8" viewBox="0 0 8 8"><path d="M1 0v8l4-4z"/><path d="M6.500 0v8" stroke="#000"/></svg>
      </div>
      <svg width="8" height="16"><path d="M0 0l7 16" stroke="#000"/></svg>
      <a href="#" class="stab text-decoration-none">Sheet2</a>
      <svg width="9" height="16"><path d="M1 0h8v16H8z" fill="#fff"/><path d="M1 0l7 16M1 16l4-8" stroke="#000"/></svg>
      <a href="#" class="stab act">siojdcsapdfkowepfdjiowsejiofwej</a>
      <svg width="9" height="16"><path d="M0 0h8L1 16H0z" fill="#fff"/><path d="M8 0L1 16M4 8l4 8" stroke="#000"/></svg>
      <a href="#" class="stab text-decoration-none">Sheet3</a>
      <svg width="8" height="16"><path d="M8 0L1 16" stroke="#000"/></svg>
      <div class="flex-grow-1 border-top border-secondary"></div>
      <div class="hbar blue d-flex">
        <button class="sbtn" aria-label="向左"><svg width="9" height="9"><use href="#lf"/></svg></button>
        <div class="thumb hthumb ms-1"><span class="hgrip"></span></div>
        <button class="sbtn ms-auto" aria-label="向右"><svg width="9" height="9"><use href="#rt"/></svg></button>
      </div>
      <div class="corner"></div>
    </div>
  </section>

  <aside class="pane d-flex flex-column">
    <div class="panehead d-flex align-items-center">
      <span class="grip"></span><span class="ms-1 flex-grow-1">开始工作</span>
      <svg width="9" height="5" class="me-2"><path d="M0 0h9L4.500 5z"/></svg>
      <svg width="11" height="11" class="ms-1"><use href="#x"/></svg>
    </div>
    <div class="paneinner flex-grow-1">
      <div class="panenav d-flex align-items-center">
        <svg width="14" height="14" viewBox="0 0 14 14"><circle cx="7" cy="7" r="6" fill="#b9c8e6" stroke="#dfe8f8"/><path d="M10 7H4M7 4L4 7l3 3" stroke="#5a76a8" fill="none" stroke-width="1.500"/></svg>
        <span class="vsep ms-1"></span>
        <svg width="14" height="14" viewBox="0 0 14 14" class="ms-1"><circle cx="7" cy="7" r="6" fill="#b9c8e6" stroke="#dfe8f8"/><path d="M4 7h6M7 4l3 3-3 3" stroke="#5a76a8" fill="none" stroke-width="1.500"/></svg>
        <span class="vsep ms-1"></span>
        <svg width="15" height="16" viewBox="0 0 15 16" class="ms-1"><path d="M10 2h2v4h-2z" fill="#b04a30"/><path d="M2 8l5.500-6L13 8v7H2z" fill="#fff" stroke="#6b5a3a"/><path d="M.5 8.500L7.500 1l7 7.500" stroke="#d8a83a" stroke-width="1.600" fill="none"/><path d="M6 10h3v5H6z" fill="#8a5a2a"/></svg>
      </div>
      <div class="logo d-flex">
        <svg width="28" height="28" class="mt-1"><use href="#off"/></svg>
        <div class="ms-1 pt-2"><small>Microsoft</small><b>Office</b> Online</div>
      </div>
      <div class="bluebar"></div>
      <div class="pbox">
        <ul class="plist">
          <li><a href="#">连接到 <span class="lat">Microsoft Office Online</span></a></li>
          <li><a href="#">获取有关使用 <span class="lat">Excel</span> 的最新新闻</a></li>
          <li><a href="#">自动从网站更新此列表</a></li>
          <li class="more pt-1">其他...</li>
        </ul>
        <div class="ps-2 ms-1 pt-2">
          <label for="q" class="d-block">搜索:</label>
          <div class="d-flex gap-2 mt-1"><input id="q" class="sfield" type="text"><button class="gobtn" aria-label="搜索"><svg width="14" height="14" viewBox="0 0 14 14"><path d="M1 7h11M7 2l5 5-5 5" fill="none" stroke="#fff" stroke-width="2"/></svg></button></div>
          <div class="pb-1">示例:&nbsp;&nbsp;&nbsp; “打印多个副本”</div>
        </div>
      </div>
      <div class="openhead">打开</div>
      <div class="pbox">
        <div class="ps-2">
          <div class="orow d-flex align-items-center border-bottom border-white"><svg width="17" height="16" class="me-2"><use href="#open"/></svg><a href="#">打开...</a></div>
          <div class="orow d-flex align-items-center"><svg width="17" height="16" class="me-2"><use href="#new"/></svg><a href="#">新建工作簿...</a></div>
        </div>
      </div>
    </div>
  </aside>
</main>

<div class="drawrow d-flex">
  <div class="tbar d-flex align-items-center">
    <span class="grip me-1"></span>
    <button class="dlabel">绘图<span class="lat">(<u>R</u>)</span></button><span class="darr"></span>
    <button class="tb" aria-label="选择对象"><svg width="16" height="16"><use href="#cursor"/></svg></button>
    <span class="vsep"></span>
    <button class="dlabel ms-1">自选图形<span class="lat">(<u>U</u>)</span></button><span class="darr"></span>
    <button class="tb" aria-label="直线"><svg width="16" height="16"><use href="#ln"/></svg></button>
    <button class="tb" aria-label="箭头"><svg width="16" height="16"><use href="#arrw"/></svg></button>
    <button class="tb" aria-label="矩形"><svg width="16" height="16"><use href="#rc"/></svg></button>
    <button class="tb" aria-label="椭圆"><svg width="16" height="16"><use href="#el"/></svg></button>
    <button class="tb" aria-label="文本框"><svg width="16" height="16"><use href="#tx"/></svg></button>
    <button class="tb" aria-label="竖排文本框"><svg width="16" height="16"><use href="#vx"/></svg></button>
    <button class="tb" aria-label="艺术字"><svg width="16" height="16"><use href="#artA"/></svg></button>
    <button class="tb" aria-label="组织结构图"><svg width="16" height="16"><use href="#dg"/></svg></button>
    <button class="tb" aria-label="剪贴画"><svg width="16" height="16"><use href="#clip"/></svg></button>
    <button class="tb" aria-label="图片"><svg width="16" height="16"><use href="#pic"/></svg></button>
    <span class="vsep"></span>
    <button class="tb" aria-label="填充颜色"><svg width="16" height="16"><use href="#fill"/></svg></button><span class="darr"></span>
    <button class="tb" aria-label="线条颜色"><svg width="16" height="16"><use href="#pen"/></svg></button><span class="darr"></span>
    <button class="tb" aria-label="字体颜色"><svg width="16" height="16"><use href="#redbar"/></svg></button><span class="darr"></span>
    <button class="tb" aria-label="线型"><svg width="16" height="16"><use href="#lw"/></svg></button>
    <button class="tb" aria-label="虚线线型"><svg width="16" height="16"><use href="#ds"/></svg></button>
    <button class="tb" aria-label="箭头样式"><svg width="16" height="16"><use href="#aw"/></svg></button>
    <button class="tb" aria-label="阴影样式"><svg width="16" height="16"><use href="#sh"/></svg></button>
    <button class="tb" aria-label="三维效果样式"><svg width="16" height="16"><use href="#td"/></svg></button>
  </div>
  <button class="tend" aria-label="工具栏选项"><svg width="7" height="8"><use href="#ovf"/></svg></button>
</div>

<div class="status d-flex align-items-center">
  <span class="me-auto">就绪</span>
  <span class="spane w1"></span><span class="spane w2"></span><span class="spane"></span><span class="spane"></span><span class="spane w3"></span>
</div>

<footer class="taskbar d-flex">
  <button class="start d-flex align-items-center gap-2">
    <svg width="19" height="18" viewBox="0 0 19 18"><path d="M3 2c2-1 4-1 6 .5L7.500 8.500C6 7 3.500 7 1.500 8z" fill="#e8502a"/><path d="M10 3c2 1.500 4 1.500 6.500.5L15 9.500c-2 1-4.500 1-6-.5z" fill="#86c440"/><path d="M1.200 9c2-1 4.500-1 6 .5L5.800 15.500C4 14-.5 14.500-.5 15.500z" fill="#4a8ce8"/><path d="M8.500 10c2 1.500 4 1.500 6.200.5L13 16.500c-2 1-4.500 1-6-.5z" fill="#f8c830"/></svg>开始</button>
  <div class="d-flex align-items-center ps-2">
    <button class="tb" aria-label="Internet Explorer"><svg width="18" height="18"><use href="#ie"/></svg></button>
    <button class="tb" aria-label="淘宝"><svg width="17" height="17" viewBox="0 0 17 17"><rect x=".5" y="1" width="16" height="13" rx="2" fill="#f57a1e"/><path d="M6 14h5l-2.500 3z" fill="#f57a1e"/><text x="3" y="12" font-size="11" fill="#fff" font-family="Noto Sans CJK SC">淘</text></svg></button>
    <button class="tb" aria-label="显示桌面"><svg width="16" height="17" viewBox="0 0 16 17"><rect x="1" y="2" width="13" height="14" rx="4" fill="#e8f2fc" stroke="#7fb0e0"/><path d="M5 7h6v6H5z" fill="none" stroke="#3b6eb8" stroke-width="1.500"/><path d="M7 10l6-7" stroke="#3b8ae8" stroke-width="2"/><circle cx="14" cy="5" r="1.500" fill="#e03a2a"/></svg></button>
    <span class="text-white fs-5 ms-2 pb-2">»</span>
  </div>
  <button class="task d-flex align-items-center gap-1 align-self-center ms-2"><svg width="16" height="16"><use href="#xl"/></svg><span class="lat">Microsoft Excel ...</span></button>
  <svg width="16" height="13" viewBox="0 0 16 13" class="ms-auto me-3 align-self-center"><path d="M4 0q1 3 2 1t2 1 2-1 2 1" fill="none" stroke="#000"/><rect x=".5" y="4.500" width="15" height="8" fill="#fff" stroke="#000"/><path d="M2 6.500h12M2 8.500h12M2 10.500h12" stroke="#000" stroke-dasharray="1 1"/></svg>
  <div class="tray d-flex align-items-center">
    <svg width="17" height="17" class="me-1"><use href="#off"/></svg>
    <svg width="15" height="16" viewBox="0 0 15 16"><circle cx="6" cy="6" r="5" fill="#777" stroke="#ddd"/><circle cx="6" cy="6" r="2" fill="#eee"/><path d="M10 14c2-1 3-3 4-6M8 13c2-1 3-3 3-5" stroke="#9ad" fill="none"/></svg>
    <svg width="16" height="17" viewBox="0 0 17 17" class="ms-1"><path d="M3 1l6 3-1 5-6-2z" fill="#4cc24a" stroke="#1f6f28"/><path d="M3 11l8-5 4 5-6 5z" fill="#9aa6b4" stroke="#445"/></svg>
    <svg width="18" height="18" viewBox="0 0 18 18"><circle cx="9" cy="9" r="8" fill="#f3e02a" stroke="#3f9a28" stroke-width="1.500"/><path d="M9 5v8M5 9h8" stroke="#1c6a1c" stroke-width="2.200"/></svg>
    <span class="ms-2">0:03</span>
  </div>
</footer>

<div class="speed d-flex align-items-center justify-content-between">
  <svg width="9" height="12" viewBox="0 0 9 12"><path d="M4.500 0v10M1 6.500L4.500 11 8 6.500" stroke="#2cb02c" fill="none" stroke-width="1.800"/></svg>
  <span class="ms-3">0K/S</span>
  <svg width="9" height="12" viewBox="0 0 9 12"><path d="M4.500 12V2M1 5.500L4.500 1 8 5.500" stroke="#e8b020" fill="none" stroke-width="1.800"/></svg>
  <span class="ms-3">0K/S</span>
  <span class="iebox"><svg width="16" height="16"><use href="#ie"/></svg></span>
</div>

<script>
// Worksheet columns: letter and width; the last column takes whatever room is left
const cols = [['',34],['A',72],['B',72],['C',694],['D',72],['E',72],['F',72],['G',72],['H',72],['I',72],['J',72],['K',72],['L',72],['M',72],['N',72],['',0]];
document.getElementById('cols').innerHTML = cols.map(c => c[1] ? `<col style="width:${c[1]}px">` : '<col>').join('');
document.getElementById('heads').innerHTML = cols.map(c => `<th${c[0] === 'C' ? ' class="hot"' : ''}>${c[0]}</th>`).join('');
const cells = {A1:'g', B1:'1', A2:'g', C3:'13231213123', D22:'g'};
for (let r = 3; r <= 27; r++) cells['A' + r] = '1';
let body = '';
for (let r = 1; r <= 46; r++) {
  body += `<tr${r === 1 ? ' class="first"' : ''}><th${r === 3 ? ' class="hot"' : ''}>${r}</th>`;
  cols.slice(1).forEach(c => {
    const v = cells[c[0] + r] || '', k = [];
    if (/^\d/.test(v)) k.push('num');
    if (c[0] + r === 'A1') k.push('note');
    if (c[0] + r === 'C3') k.push('cur');
    body += `<td${k.length ? ` class="${k.join(' ')}"` : ''}>${v}</td>`;
  });
  body += '</tr>';
}
document.getElementById('rows').innerHTML = body;

// Line chart embedded in the sheet
const x = k => 65.5 + 24.23 * (k - 1), y = v => 404.5 - 315 * v;
let g = '<rect x=".5" y=".5" width="679" height="451" fill="#fff" stroke="#000"/><rect x="53" y="26" width="627" height="378" fill="#c0c0c0"/><path d="M53 26.5h627" stroke="#808080"/>';
for (const v of [0, .2, .4, .6, .8, 1]) g += `<path d="M53 ${y(v)}h627" stroke="#000"/>`;
for (const v of [0, .2, .4, .6, .8, 1, 1.2]) g += `<text x="41" y="${y(v) + 6}" text-anchor="end">${v}</text>`;
g += '<path d="M53.5 26v379" stroke="#000"/>';
for (let k = 1; k <= 24; k++) g += `<path d="M${Math.round(53 + 24.23 * k) + .5} 400v5" stroke="#000"/><text x="${x(k) - 1}" y="432" text-anchor="middle">${k}</text>`;
const data = [0, 0].concat(Array(22).fill(1));
g += `<polyline points="${data.map((v, i) => x(i + 1) + ',' + y(v)).join(' ')} 680,${y(1)}" fill="none" stroke="#000080"/>`;
data.forEach((v, i) => g += `<path d="M${x(i + 1) - 3} ${y(v)}l3-4 3 4-3 4z" fill="#000080"/>`);
g += `<rect x="${x(1) - 3}" y="${y(1) - 3}" width="6" height="6" fill="#e000e0"/>`;
g += '<text x="151" y="231" font-family="Noto Sans CJK SC, sans-serif" font-size="48" font-weight="300" fill="#fff" stroke="#000">请在此键入您自己的内</text>';
document.getElementById('plot').innerHTML = g;
</script>
<script src="https://cdn.jsdelivr.net/npm/bootstrap@5.3.0/dist/js/bootstrap.bundle.min.js"></script>
</body>
</html>
